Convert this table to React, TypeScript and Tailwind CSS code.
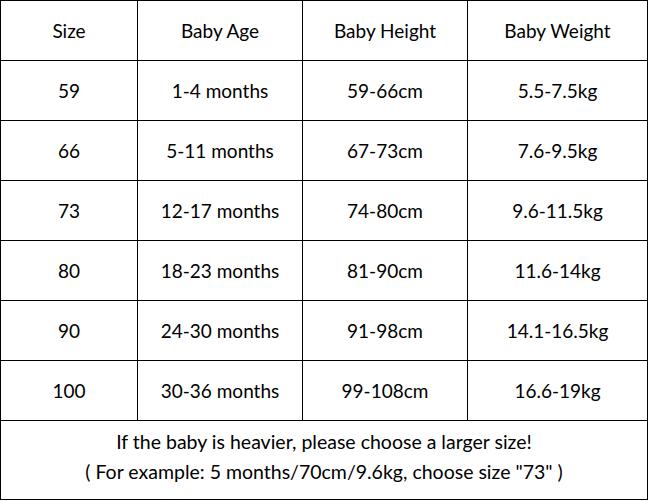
const rows = [
  ["59", "1-4 months", "59-66cm", "5.5-7.5kg"],
  ["66", "5-11 months", "67-73cm", "7.6-9.5kg"],
  ["73", "12-17 months", "74-80cm", "9.6-11.5kg"],
  ["80", "18-23 months", "81-90cm", "11.6-14kg"],
  ["90", "24-30 months", "91-98cm", "14.1-16.5kg"],
  ["100", "30-36 months", "99-108cm", "16.6-19kg"],
];

const header = ["Size", "Baby Age", "Baby Height", "Baby Weight"];

export default function App() {
  return (
    <div className="w-[649px] h-[501px] bg-white text-black font-['Lato','Open_Sans',sans-serif] text-[19px]">
      <div className="w-[648px] border-l border-t border-black">
        <div className="grid grid-cols-[137px_165px_165px_180px]">
          {[header, ...rows].map((r, i) =>
            r.map((c, j) => (
              <div
                key={i + "-" + j}
                className="h-[60px] border-r border-b border-black flex items-center justify-center pt-[2px]"
              >
                {c}
              </div>
            ))
          )}
        </div>
        <div className="h-[79px] border-r border-b border-black flex flex-col items-center justify-center leading-[30px] text-[19.5px] pb-[6px]">
          <p>If the baby is heavier, please choose a larger size!</p>
          <p>( For example: 5 months/70cm/9.6kg, choose size "73" )</p>
        </div>
      </div>
    </div>
  );
}
